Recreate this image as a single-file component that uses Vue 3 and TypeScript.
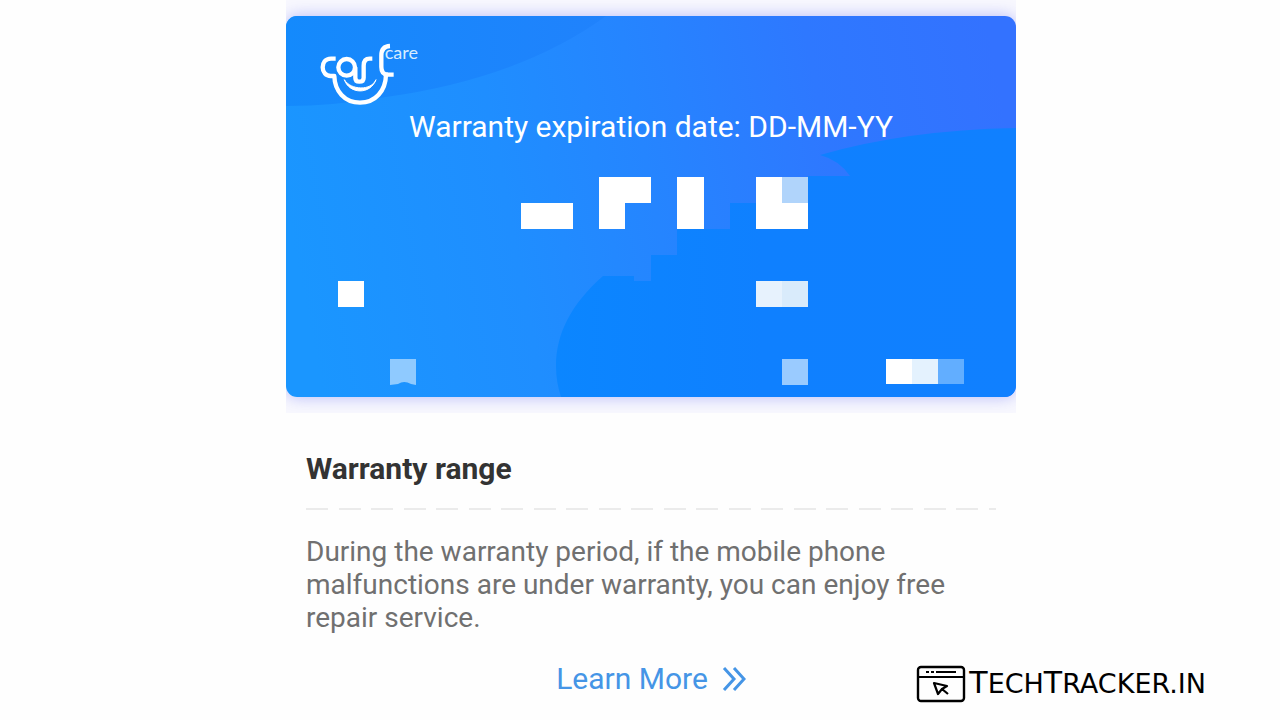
<script setup lang="ts">
interface Block {
  x: number
  y: number
  w: number
  h: number
  fill: string
}

const expiry = 'DD-MM-YY'
const dashCount = 22

const blocks: Block[] = [
  { x: 235, y: 187, w: 52, h: 26, fill: '#ffffff' },
  { x: 313, y: 161, w: 26, h: 52, fill: '#ffffff' },
  { x: 339, y: 161, w: 26, h: 26, fill: '#ffffff' },
  { x: 391, y: 161, w: 27, h: 52, fill: '#ffffff' },
  { x: 470, y: 161, w: 26, h: 52, fill: '#ffffff' },
  { x: 496, y: 187, w: 26, h: 26, fill: '#ffffff' },
  { x: 496, y: 161, w: 26, h: 26, fill: '#b0d4fb' },
  { x: 52, y: 265, w: 26, h: 26, fill: '#ffffff' },
  { x: 470, y: 265, w: 26, h: 26, fill: '#e7f2fd' },
  { x: 496, y: 265, w: 26, h: 26, fill: '#d9ebfb' },
  { x: 496, y: 343, w: 26, h: 26, fill: '#9acbff' },
  { x: 600, y: 343, w: 26, h: 25, fill: '#ffffff' },
  { x: 626, y: 343, w: 26, h: 25, fill: '#e4f2fe' },
  { x: 652, y: 343, w: 26, h: 25, fill: '#62aeff' },
]
</script>

<template>
  <div class="page">
    <main class="content">
      <div class="stage">
        <section class="card" aria-label="Warranty card">
          <svg class="art" viewBox="0 0 730 381" preserveAspectRatio="none" aria-hidden="true">
            <defs>
              <linearGradient id="base" x1="0" y1="0.5" x2="1" y2="0.4">
                <stop offset="0" stop-color="#1a96ff" />
                <stop offset="0.3" stop-color="#1f8eff" />
                <stop offset="0.5" stop-color="#2585ff" />
                <stop offset="0.75" stop-color="#2e78ff" />
                <stop offset="1" stop-color="#3372ff" />
              </linearGradient>
              <linearGradient id="wave" x1="0" y1="0" x2="1" y2="0">
                <stop offset="0" stop-color="#148afc" />
                <stop offset="1" stop-color="#2082fc" />
              </linearGradient>
              <linearGradient id="pool" x1="0" y1="0" x2="1" y2="0">
                <stop offset="0" stop-color="#0b86ff" />
                <stop offset="0.45" stop-color="#0f80ff" />
                <stop offset="1" stop-color="#1080ff" />
              </linearGradient>
            </defs>
            <rect width="730" height="381" fill="url(#base)" />
            <path d="M0 0H320Q235 62 100 81Q48 90 0 90Z" fill="url(#wave)" />
            <path
              d="M730 112Q620 114 534 139Q553 144 564 160H522V187H444V213H391V239H365V265H348V260H317C285 288 270 318 270 350Q270 366 275 381H722Q730 378 730 370Z"
              fill="url(#pool)"
            />
            <rect
              v-for="b in blocks"
              :key="`${b.x}-${b.y}`"
              :x="b.x"
              :y="b.y"
              :width="b.w"
              :height="b.h"
              :fill="b.fill"
            />
            <path d="M104 343H130V369L125 368Q118 364 112 368L104 369Z" fill="#8fcaff" />
          </svg>
          <div class="logo">
            <svg viewBox="0 0 360 240" role="img" aria-label="Carlcare">
              <g fill="none" stroke="#fff" stroke-width="13" stroke-linejoin="round">
                <path d="M77 71H63C45 71 38 84 38 97C38 112 48 123 62 123H73C74 168 104 203 150 203C196 203 227 168 228 119H251" />
                <circle cx="110" cy="97" r="25" />
                <path d="M136 97V128Q136 140 148 140Q161 140 161 128V92Q161 71 179 71H187" />
                <path d="M240 33Q214 34 214 62V96Q214 119 234 119" />
              </g>
              <path d="M103 134C118 178 181 180 198 134C184 168 122 166 103 134Z" fill="#fff" stroke="#fff" stroke-width="3" />
              <text x="224" y="71" class="logo-word">care</text>
            </svg>
          </div>
          <p class="expiry">Warranty expiration date: {{ expiry }}</p>
        </section>
      </div>

      <section class="range">
        <h2>Warranty range</h2>
        <div class="rule" aria-hidden="true">
          <i v-for="n in dashCount" :key="n"></i>
        </div>
        <p>
          During the warranty period, if the mobile phone malfunctions are under warranty, you can enjoy free repair
          service.
        </p>
        <a class="more" href="#">
          <span>Learn More</span>
          <svg viewBox="0 0 24 24" aria-hidden="true">
            <path d="M2 1L12 12L2 23M12 1L22 12L12 23" fill="none" stroke="#4595e6" stroke-width="3" />
          </svg>
        </a>
      </section>
    </main>

    <footer class="brand">
      <svg viewBox="0 0 50 38" aria-hidden="true">
        <g fill="none" stroke="#000">
          <rect x="2" y="2" width="46" height="34" rx="3" stroke-width="2.4" />
          <path d="M2 12H48" stroke-width="2" />
          <path d="M10 7H13M15 7H18M20 7H40" stroke-width="1.8" />
          <path d="M32 29L26 24L31 21L18 18L22 29L26 24" stroke-width="2.2" stroke-linejoin="round" />
        </g>
      </svg>
      <span class="name"><b>T</b>ECH<b>T</b>RACKER.IN</span>
    </footer>
  </div>
</template>

<style>
body {
  margin: 0;
  background: #fefefe;
}
</style>

<style scoped>
.page {
  position: relative;
  box-sizing: border-box;
  min-height: 100vh;
  padding-left: 22px;
  font-family: Roboto, "Liberation Sans", sans-serif;
}
.content {
  max-width: 730px;
  margin: 0 auto;
}
.stage {
  padding: 16px 0;
  overflow: hidden;
  background: #f8f8fe;
}
.card {
  position: relative;
  box-sizing: border-box;
  min-height: 381px;
  padding: 19px 24px;
  border-radius: 11px;
  box-shadow: 0 0 16px rgba(80, 90, 240, 0.4);
  color: #fff;
}
.art {
  position: absolute;
  inset: 0;
  width: 100%;
  height: 100%;
  border-radius: 11px;
}
.logo {
  position: relative;
  height: 74px;
}
.logo svg {
  display: block;
  width: 120px;
  height: 80px;
}
.logo-word {
  fill: #d6ecff;
  font-family: Lato, sans-serif;
  font-size: 54px;
  font-weight: 400;
}
.expiry {
  position: relative;
  margin: 0;
  font-size: 30px;
  line-height: 36px;
  text-align: center;
}
.range {
  padding: 38px 20px 0;
}
h2 {
  margin: 0;
  color: #333;
  font-size: 30px;
  font-weight: 700;
  line-height: 36px;
}
.rule {
  display: flex;
  justify-content: space-between;
  margin: 21px 0 25px;
}
.rule i {
  width: 22px;
  height: 2px;
  background: #ebebeb;
}
.rule i:last-child {
  width: 7px;
}
.range p {
  margin: 0;
  color: #707070;
  font-size: 28px;
  line-height: 33px;
}
.more {
  display: flex;
  align-items: center;
  justify-content: center;
  gap: 14px;
  margin-top: 26px;
  color: #4595e6;
  font-size: 30px;
  line-height: 38px;
  text-decoration: none;
}
.more svg {
  width: 24px;
  height: 24px;
}
.brand {
  position: absolute;
  right: 74px;
  bottom: 17px;
  display: flex;
  align-items: center;
  gap: 3px;
  color: #000;
  font-family: "DejaVu Sans", sans-serif;
}
.brand svg {
  width: 50px;
  height: 38px;
}
.name {
  font-size: 27px;
  line-height: 38px;
}
.name b {
  font-size: 30px;
  font-weight: 400;
}
</style>
